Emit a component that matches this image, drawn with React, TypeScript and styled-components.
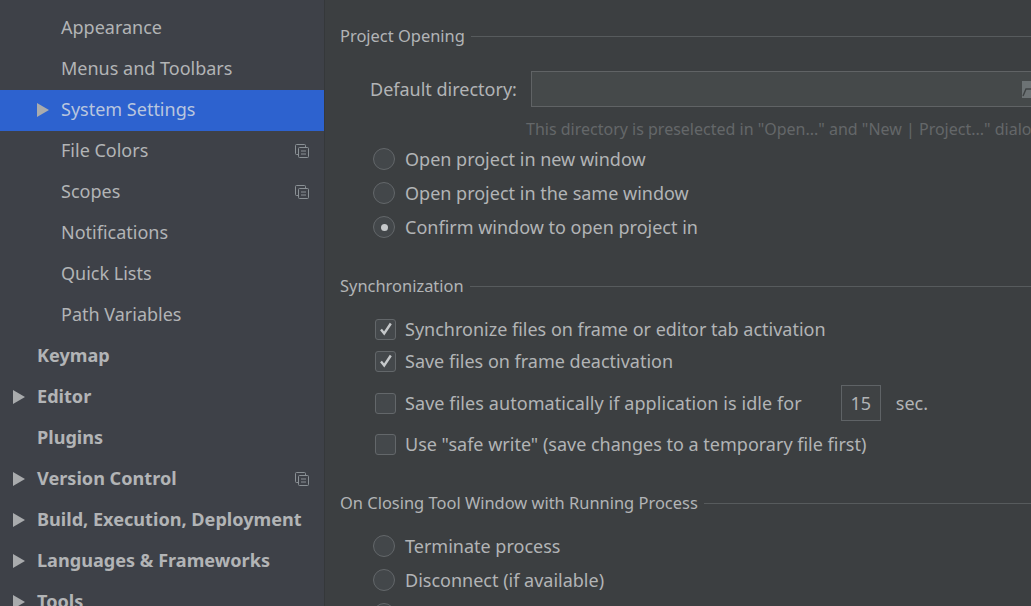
import React from "react";
import styled, { createGlobalStyle } from "styled-components";

const GlobalStyle = createGlobalStyle`
  html, body {
    margin: 0;
    padding: 0;
    height: 100%;
    overflow: hidden;
    background: #3c3f41;
  }
  #root {
    height: 100%;
  }
`;

type NavItem = {
  label: string;
  level: 0 | 1;
  arrow?: boolean;
  copy?: boolean;
  selected?: boolean;
};

const navItems: NavItem[] = [
  { label: "Appearance", level: 1 },
  { label: "Menus and Toolbars", level: 1 },
  { label: "System Settings", level: 1, arrow: true, selected: true },
  { label: "File Colors", level: 1, copy: true },
  { label: "Scopes", level: 1, copy: true },
  { label: "Notifications", level: 1 },
  { label: "Quick Lists", level: 1 },
  { label: "Path Variables", level: 1 },
  { label: "Keymap", level: 0 },
  { label: "Editor", level: 0, arrow: true },
  { label: "Plugins", level: 0 },
  { label: "Version Control", level: 0, arrow: true, copy: true },
  { label: "Build, Execution, Deployment", level: 0, arrow: true },
  { label: "Languages & Frameworks", level: 0, arrow: true },
  { label: "Tools", level: 0, arrow: true },
];

const CopyIcon = () => (
  <svg width="14" height="14" viewBox="0 0 14 14" fill="none" stroke="#8a9095" strokeWidth="1">
    <path d="M3.5 10.5H1.5a1 1 0 0 1-1-1V1.5a1 1 0 0 1 1-1h8a1 1 0 0 1 1 1v2" />
    <rect x="3.5" y="3.5" width="10" height="10" rx="1" />
    <path d="M6 7h5M6 10h5" />
  </svg>
);

const FolderIcon = () => (
  <svg width="17" height="17" viewBox="0 0 17 17">
    <path d="M0 0h17v17H0z" fill="#6c7274" />
    <path d="M1 15l3-7h12" fill="none" stroke="#3f4344" strokeWidth="1.4" />
  </svg>
);

const CheckMark = () => (
  <svg width="14" height="14" viewBox="0 0 14 14" fill="none" stroke="#c5c8ca" strokeWidth="2.4">
    <path d="M2 7.5l3.2 4L11.8 1.5" />
  </svg>
);

const App: React.FC = () => {
  return (
    <Page>
      <GlobalStyle />
      <Sidebar>
        {navItems.map((item) => (
          <NavRow key={item.label} $selected={item.selected}>
            {item.arrow && <Arrow $level={item.level} />}
            <NavLabel $level={item.level}>{item.label}</NavLabel>
            {item.copy && (
              <CopyWrap>
                <CopyIcon />
              </CopyWrap>
            )}
          </NavRow>
        ))}
      </Sidebar>
      <Content>
        <ProjectTitle>
          <span>Project Opening</span>
          <TitleLine />
        </ProjectTitle>
        <DirectoryRow>
          <FieldLabel>Default directory:</FieldLabel>
          <PathInput>
            <FolderButton>
              <FolderIcon />
            </FolderButton>
          </PathInput>
        </DirectoryRow>
        <Hint>This directory is preselected in "Open..." and "New | Project..." dialogs.</Hint>
        <RadioGroup>
          <OptionRow>
            <Radio />
            <OptionText>Open project in new window</OptionText>
          </OptionRow>
          <OptionRow>
            <Radio />
            <OptionText>Open project in the same window</OptionText>
          </OptionRow>
          <OptionRow>
            <Radio $checked />
            <OptionText>Confirm window to open project in</OptionText>
          </OptionRow>
        </RadioGroup>

        <SyncTitle>
          <span>Synchronization</span>
          <TitleLine />
        </SyncTitle>
        <CheckGroup>
          <CheckRow $height={32}>
            <CheckBox>
              <CheckMark />
            </CheckBox>
            <OptionText>Synchronize files on frame or editor tab activation</OptionText>
          </CheckRow>
          <CheckRow $height={32}>
            <CheckBox>
              <CheckMark />
            </CheckBox>
            <OptionText>Save files on frame deactivation</OptionText>
          </CheckRow>
          <CheckRow $height={36} $top={8}>
            <CheckBox />
            <WideText>Save files automatically if application is idle for</WideText>
            <NumberBox>15</NumberBox>
            <Unit>sec.</Unit>
          </CheckRow>
          <CheckRow $height={32} $top={7}>
            <CheckBox />
            <OptionText>Use "safe write" (save changes to a temporary file first)</OptionText>
          </CheckRow>
        </CheckGroup>

        <ClosingTitle>
          <span>On Closing Tool Window with Running Process</span>
          <TitleLine />
        </ClosingTitle>
        <ClosingGroup>
          <OptionRow>
            <Radio />
            <OptionText>Terminate process</OptionText>
          </OptionRow>
          <OptionRow>
            <Radio />
            <OptionText>Disconnect (if available)</OptionText>
          </OptionRow>
          <OptionRow>
            <Radio />
          </OptionRow>
        </ClosingGroup>
      </Content>
    </Page>
  );
};

export default App;

const Page = styled.div`
  display: flex;
  width: 1031px;
  height: 606px;
  overflow: hidden;
  background: #3c3f41;
  color: #b2b4b6;
  font-family: "Noto Sans", "Open Sans", sans-serif;
  font-size: 18px;
`;

const Sidebar = styled.nav`
  flex: 0 0 325px;
  box-sizing: border-box;
  height: 606px;
  padding-top: 8px;
  overflow: hidden;
  background: #3e4148;
  border-right: 1px solid #35383a;
`;

const NavRow = styled.div<{ $selected?: boolean }>`
  position: relative;
  display: flex;
  align-items: center;
  height: 41px;
  background: ${({ $selected }) => ($selected ? "#2d62cf" : "transparent")};
  color: ${({ $selected }) => ($selected ? "#b9c6de" : "inherit")};
`;

const NavLabel = styled.span<{ $level: 0 | 1 }>`
  margin-bottom: 4px;
  padding-left: ${({ $level }) => ($level === 1 ? "61px" : "37px")};
  font-size: ${({ $level }) => ($level === 0 ? "18.12px" : "18px")};
  font-weight: ${({ $level }) => ($level === 0 ? 700 : 400)};
  white-space: nowrap;
`;

const Arrow = styled.i<{ $level: 0 | 1 }>`
  position: absolute;
  left: ${({ $level }) => ($level === 1 ? "37px" : "13px")};
  top: 50%;
  width: 0;
  height: 0;
  margin-top: -8px;
  border-left: 12px solid #a9abad;
  border-top: 7px solid transparent;
  border-bottom: 7px solid transparent;
`;

const CopyWrap = styled.span`
  position: absolute;
  right: 15px;
  top: 13px;
  display: flex;
`;

const Content = styled.main`
  flex: 1;
  min-width: 0;
  padding-left: 15px;
`;

const SectionTitle = styled.div`
  display: flex;
  align-items: center;
  gap: 6px;
  height: 28px;
  font-size: 16.45px;
  white-space: nowrap;
`;

const ProjectTitle = styled(SectionTitle)`
  margin-top: 21px;
`;

const SyncTitle = styled(SectionTitle)`
  margin-top: 27px;
`;

const ClosingTitle = styled(SectionTitle)`
  margin-top: 28px;
`;

const TitleLine = styled.div`
  flex: 1;
  height: 1px;
  margin-top: 3px;
  background: #575b5d;
`;

const DirectoryRow = styled.div`
  display: flex;
  align-items: center;
  gap: 14px;
  margin-top: 22px;
  padding-left: 30px;
`;

const FieldLabel = styled.span`
  white-space: nowrap;
`;

const PathInput = styled.div`
  display: flex;
  align-items: center;
  justify-content: flex-end;
  box-sizing: border-box;
  flex: 1;
  height: 36px;
  background: #45494a;
  border: 1px solid #606365;
  border-right: none;
`;

const FolderButton = styled.span`
  display: flex;
  flex: 0 0 9px;
  overflow: hidden;

  svg {
    flex: none;
  }
`;

const Hint = styled.div`
  height: 24px;
  margin-top: 10px;
  padding-left: 186px;
  font-size: 16px;
  line-height: 24px;
  color: #646769;
  white-space: nowrap;
`;

const RadioGroup = styled.div`
  display: flex;
  flex-direction: column;
  margin-top: 1px;
  padding-left: 33px;
`;

const ClosingGroup = styled(RadioGroup)`
  margin-top: 13px;
`;

const OptionRow = styled.label`
  display: flex;
  align-items: center;
  gap: 10px;
  height: 34px;
  white-space: nowrap;
`;

const OptionText = styled.span`
  margin-bottom: 1px;
`;

const WideText = styled(OptionText)`
  letter-spacing: 0.08px;
`;

const Radio = styled.span<{ $checked?: boolean }>`
  display: flex;
  flex: none;
  align-items: center;
  justify-content: center;
  box-sizing: border-box;
  width: 22px;
  height: 22px;
  border-radius: 50%;
  background: #43474a;
  border: 1px solid #63676a;

  &::after {
    content: "";
    display: ${({ $checked }) => ($checked ? "block" : "none")};
    width: 7px;
    height: 7px;
    border-radius: 50%;
    background: #c5c8ca;
  }
`;

const CheckGroup = styled.div`
  display: flex;
  flex-direction: column;
  margin-top: 14px;
  padding-left: 35px;
`;

const CheckRow = styled.label<{ $height: number; $top?: number }>`
  display: flex;
  align-items: center;
  gap: 9px;
  height: ${({ $height }) => $height}px;
  margin-top: ${({ $top }) => $top ?? 0}px;
  white-space: nowrap;
`;

const CheckBox = styled.span`
  display: flex;
  flex: none;
  align-items: center;
  justify-content: center;
  box-sizing: border-box;
  width: 21px;
  height: 21px;
  border-radius: 3px;
  background: #44484b;
  border: 1px solid #63676a;
`;

const NumberBox = styled.span`
  display: flex;
  align-items: center;
  justify-content: center;
  box-sizing: border-box;
  width: 40px;
  height: 36px;
  margin-left: 30px;
  background: #3f4244;
  border: 1px solid #5f6366;
`;

const Unit = styled.span`
  margin-bottom: 1px;
  margin-left: 6px;
`;
